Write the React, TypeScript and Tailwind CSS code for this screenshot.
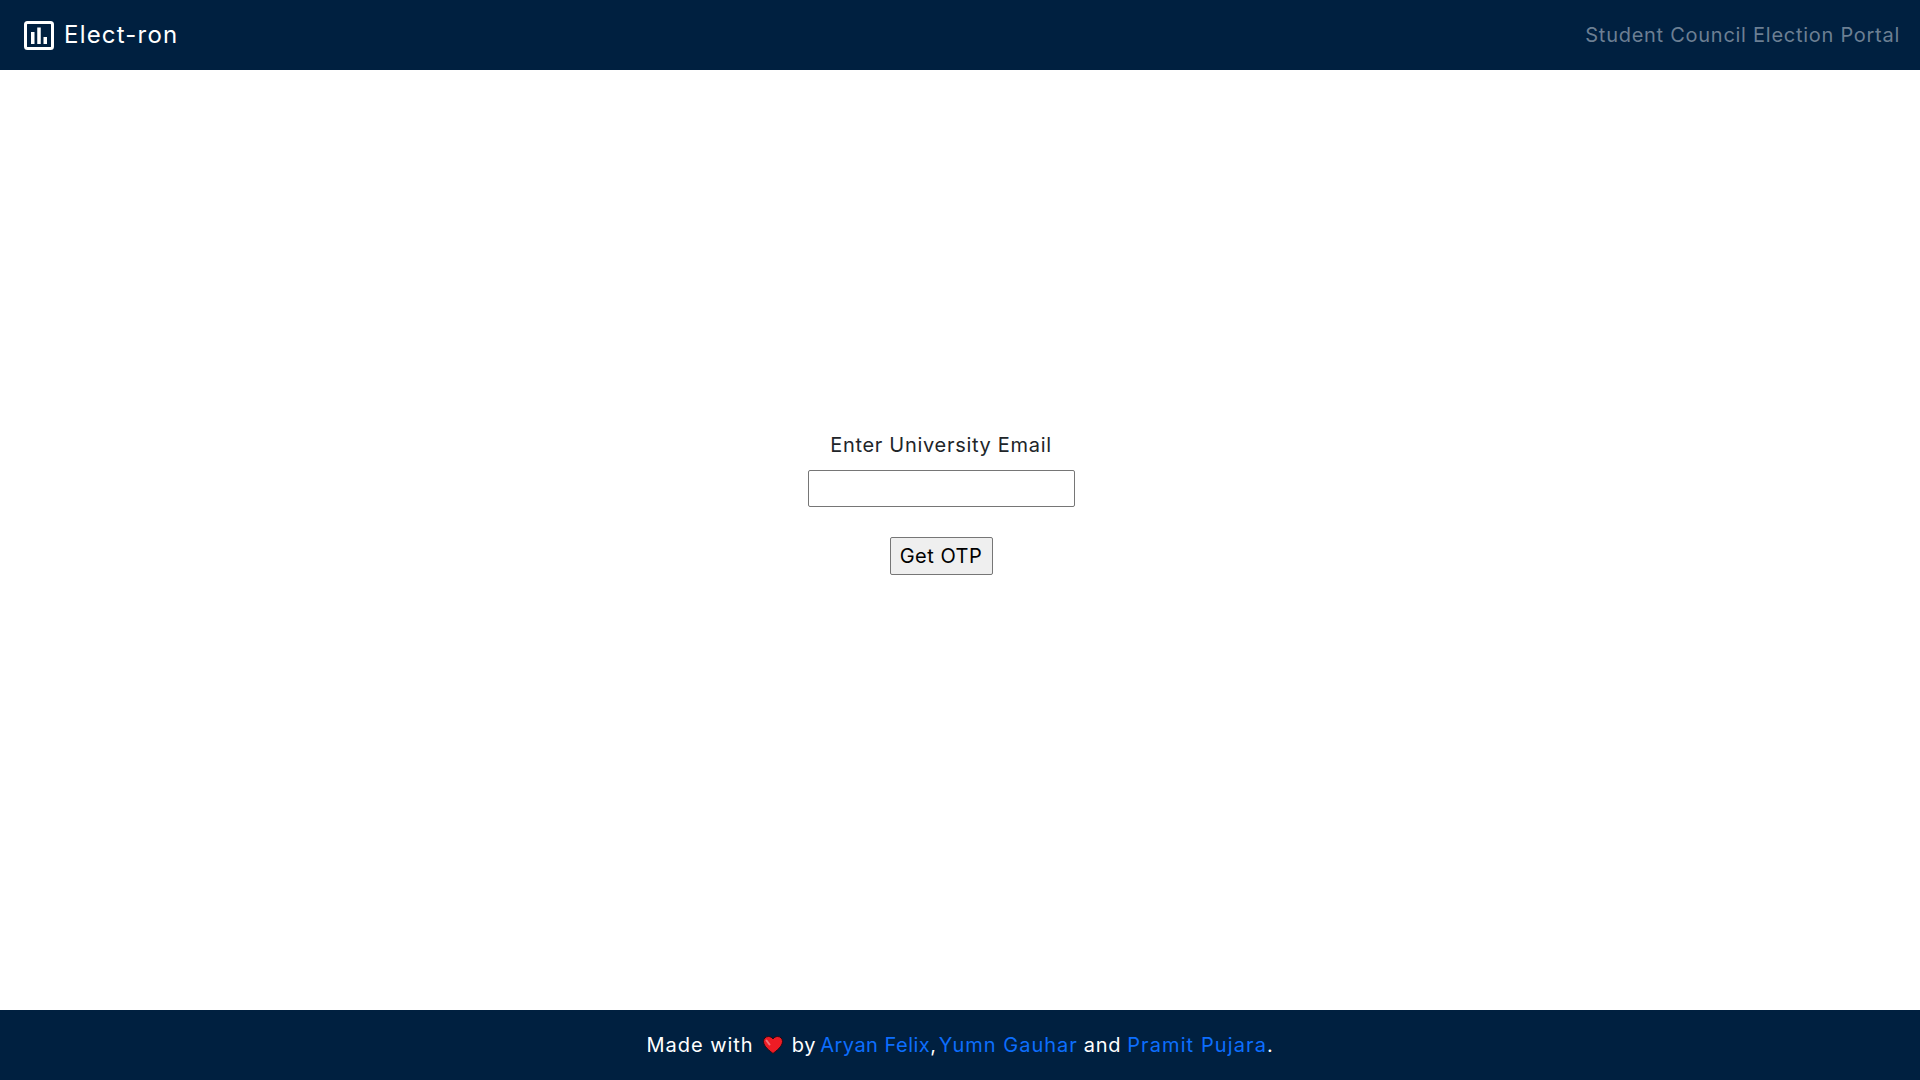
function ChartIcon() {
  return (
    <svg width="30" height="29" viewBox="0 0 30 29" fill="none">
      <rect x="1.5" y="1.5" width="27" height="26" rx="2" stroke="#fff" strokeWidth="3" />
      <rect x="7" y="11" width="3.5" height="12" fill="#fff" />
      <rect x="13.25" y="6.5" width="3.5" height="16.5" fill="#fff" />
      <rect x="19.5" y="16" width="3.5" height="7" fill="#fff" />
    </svg>
  );
}

function Heart() {
  return (
    <svg width="20" height="18" viewBox="0 0 20 18">
      <path
        d="M10 17.5 C7 15 .5 10.5 .5 5.5 C.5 2.5 2.7 .5 5.4 .5 C7.4 .5 9 1.5 10 3 C11 1.5 12.6 .5 14.6 .5 C17.3 .5 19.5 2.5 19.5 5.5 C19.5 10.5 13 15 10 17.5 Z"
        fill="#ee1c25"
        stroke="#2a0b14"
        strokeWidth="1"
      />
      <path d="M3.5 4.5 L6.5 8.5" stroke="#f4737a" strokeWidth="2" strokeLinecap="round" />
    </svg>
  );
}

export default function App() {
  return (
    <div className="min-h-screen flex flex-col bg-white font-['Inter',sans-serif]">
      <header className="h-[70px] bg-[#002040] flex items-center justify-between pl-6 pr-5">
        <div className="flex items-center gap-[10px]">
          <ChartIcon />
          <span className="text-white text-[24px] tracking-[1.2px]">Elect-ron</span>
        </div>
        <span className="text-[20px] tracking-[0.73px] text-[#6c7f93]">Student Council Election Portal</span>
      </header>

      <main className="flex-1 flex flex-col items-center justify-center pr-[38px] pb-[76px]">
        <label className="text-[20px] tracking-[0.7px] text-[#212529] mb-[10px]">Enter University Email</label>
        <input type="text" className="w-[267px] h-[37px] border border-[#767676] rounded-[2px] bg-white" />
        <button className="mt-[30px] h-[38px] w-[103px] border border-[#767676] rounded-[2px] bg-[#efefef] text-[20px] tracking-[0.5px] text-black">
          Get OTP
        </button>
      </main>

      <footer className="h-[70px] bg-[#002040] flex items-center justify-center text-white text-[20px] tracking-[0.7px]">
        <span className="tracking-[0.97px]">Made with</span>
        <span className="mx-[9px] flex items-center"><Heart /></span>
        <span className="mr-[4px]">by</span>
        <a className="text-[#0d6efd] tracking-[0.48px]">Aryan Felix</a>
        <span className="mr-[2px]">,</span>
        <a className="text-[#0d6efd] tracking-[1px]">Yumn Gauhar</a>
        <span className="mx-[6px]">and</span>
        <a className="text-[#0d6efd] tracking-[1.1px]">Pramit Pujara</a>
        <span>.</span>
      </footer>
    </div>
  );
}
